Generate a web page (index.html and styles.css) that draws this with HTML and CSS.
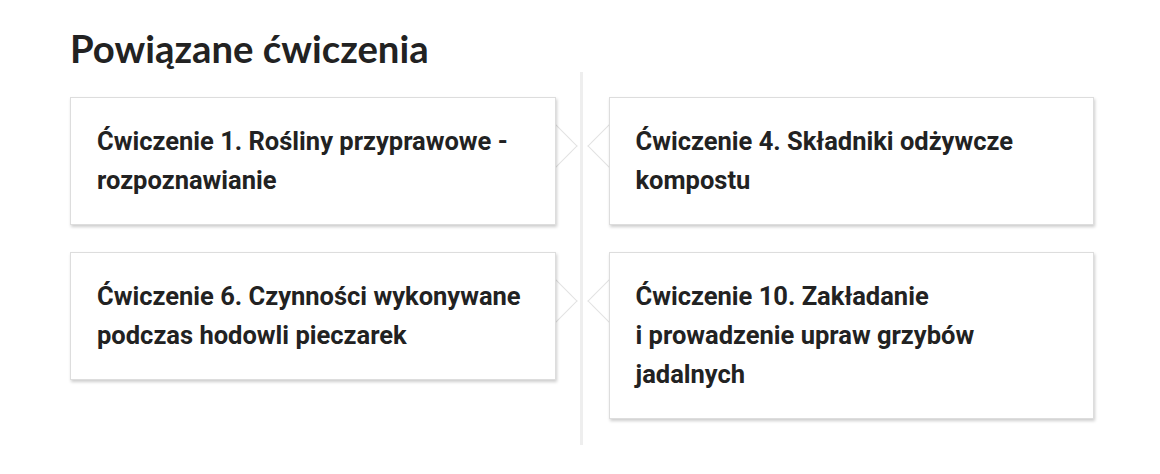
FILE: index.html
```html
<!DOCTYPE html>
<html lang="pl">
<head>
    <meta charset="UTF-8">
    <meta name="viewport" content="width=device-width, initial-scale=1.0">
    <title>Powiązane ćwiczenia</title>
    <link rel="stylesheet" href="styles.css">
</head>
<body>
    <section class="related">
        <h2>Powiązane ćwiczenia</h2>
        <div class="timeline">
            <a class="card left" href="#">Ćwiczenie 1. Rośliny przyprawowe - rozpoznawianie</a>
            <a class="card right" href="#">Ćwiczenie 4. Składniki odżywcze kompostu</a>
            <a class="card left" href="#">Ćwiczenie 6. Czynności wykonywane podczas hodowli pieczarek</a>
            <a class="card right" href="#">Ćwiczenie 10. Zakładanie<br>i prowadzenie upraw grzybów jadalnych</a>
        </div>
    </section>
</body>
</html>
```

FILE: styles.css
```css
body { margin: 0; background: #fff; color: #222; }
.related { width: 1024px; padding: 0 66px 0 70px; }
.related h2 { font-family: Lato, sans-serif; font-weight: 700; font-size: 38.3px; line-height: 46px; margin: 25px 0 0; color: #222; }

/* two columns of cards with a vertical line between them */
.timeline { position: relative; display: grid; grid-template-columns: 1fr 1fr; column-gap: 53px; row-gap: 27px; align-items: start; padding: 25px 0 26px; margin-top: 1px; }
.timeline::before { content: ""; position: absolute; top: 0; bottom: 0; left: 510px; width: 3px; background: #eee; }

.card { position: relative; display: block; background: #fff; border: 1px solid #ddd; box-shadow: 1px 2px 3px rgba(0, 0, 0, 0.2); padding: 24px 26px; font-family: Roboto, sans-serif; font-weight: 700; font-size: 25.5px; line-height: 39px; color: #222; text-decoration: none; }

/* little pointer towards the line, drawn as a turned square behind the card */
.card::after { content: ""; position: absolute; top: 32px; width: 31px; height: 31px; background: #fff; border: 1px solid #e2e2e2; transform: rotate(45deg); z-index: -1; }
.card.left::after { right: -16px; border-left: none; border-bottom: none; }
.card.right::after { left: -16px; border-right: none; border-top: none; }
```
